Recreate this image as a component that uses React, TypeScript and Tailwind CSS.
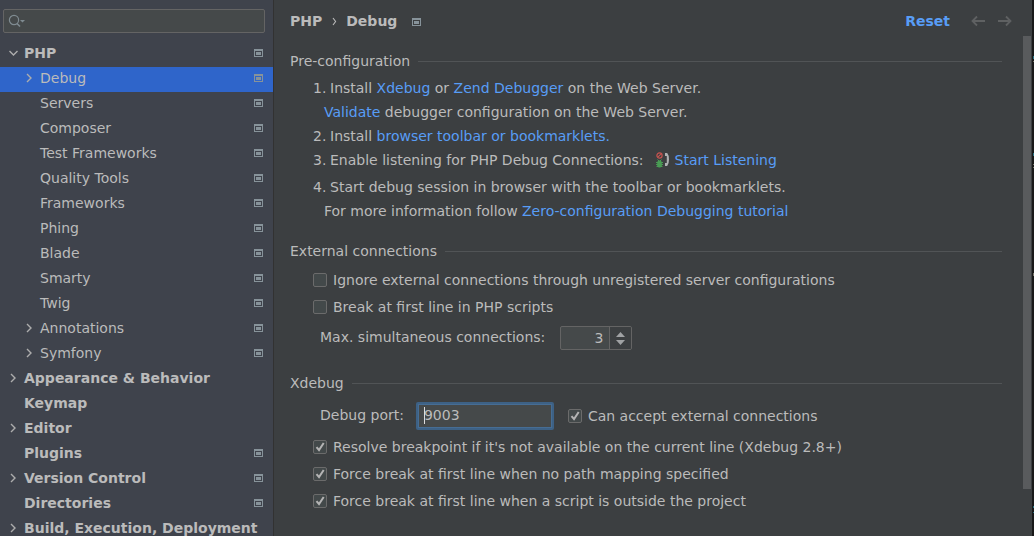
import React, { useState } from "react";

type Item = {
  label: string;
  level: 0 | 1;
  arrow?: "open" | "closed";
  project?: boolean;
};

const ITEMS: Item[] = [
  { label: "PHP", level: 0, arrow: "open", project: true },
  { label: "Debug", level: 1, arrow: "closed", project: true },
  { label: "Servers", level: 1, project: true },
  { label: "Composer", level: 1, project: true },
  { label: "Test Frameworks", level: 1, project: true },
  { label: "Quality Tools", level: 1, project: true },
  { label: "Frameworks", level: 1, project: true },
  { label: "Phing", level: 1, project: true },
  { label: "Blade", level: 1, project: true },
  { label: "Smarty", level: 1, project: true },
  { label: "Twig", level: 1, project: true },
  { label: "Annotations", level: 1, arrow: "closed", project: true },
  { label: "Symfony", level: 1, arrow: "closed", project: true },
  { label: "Appearance & Behavior", level: 0, arrow: "closed" },
  { label: "Keymap", level: 0 },
  { label: "Editor", level: 0, arrow: "closed" },
  { label: "Plugins", level: 0, project: true },
  { label: "Version Control", level: 0, arrow: "closed", project: true },
  { label: "Directories", level: 0, project: true },
  { label: "Build, Execution, Deployment", level: 0, arrow: "closed" },
];

function ProjectIcon() {
  return (
    <svg className="shrink-0" width="9" height="8" viewBox="0 0 9 8" shapeRendering="crispEdges" aria-hidden="true">
      <path fill="#87939a" fillRule="evenodd" d="M0 0h9v8H0zM1 2v5h7V2z" />
      <path fill="#87939a" d="M2 3h5v3H2z" />
    </svg>
  );
}

function Chevron({ open }: { open: boolean }) {
  return (
    <svg width="10" height="10" viewBox="0 0 10 10" fill="none" stroke="#adadad" strokeWidth="1.4" aria-hidden="true">
      <path d={open ? "M1.5 3l4 4 4-4" : "M3 1l4 4-4 4"} />
    </svg>
  );
}

function TreeRow({ item, selected, onSelect }: { item: Item; selected: boolean; onSelect: () => void }) {
  return (
    <li>
      <button
        type="button"
        onClick={onSelect}
        className={`flex h-[25px] w-full items-center pr-2.5 pb-[3px] text-left whitespace-nowrap ${
          item.level === 0 ? "pl-2 font-bold" : "pl-6"
        } ${selected ? "bg-[#2f65ca]" : ""}`}
      >
        <span className="flex w-4 shrink-0 items-center">
          {item.arrow && <Chevron open={item.arrow === "open"} />}
        </span>
        <span className="flex-1">{item.label}</span>
        {item.project && <ProjectIcon />}
      </button>
    </li>
  );
}

function SectionTitle({ children }: { children: React.ReactNode }) {
  return (
    <h2 className="flex h-5 items-center gap-2">
      {children}
      <span className="h-px flex-1 bg-[#515456]" />
    </h2>
  );
}

function Link({ children }: { children: React.ReactNode }) {
  return (
    <a href="#" className="text-[#589df6]">
      {children}
    </a>
  );
}

function Check({ label, initial = false }: { label: string; initial?: boolean }) {
  const [on, setOn] = useState(initial);
  return (
    <label className="flex h-[27px] items-center gap-1.5 whitespace-nowrap">
      <span className="grid size-3.5 shrink-0">
        <input
          type="checkbox"
          checked={on}
          onChange={(e) => setOn(e.target.checked)}
          className="col-start-1 row-start-1 size-3.5 appearance-none rounded-xs border border-[#6b6b6b] bg-[#43494a]"
        />
        {on && (
          <svg
            className="pointer-events-none col-start-1 row-start-1"
            width="14"
            height="14"
            viewBox="0 0 14 14"
            fill="none"
            stroke="#b4b4b4"
            strokeWidth="2"
            aria-hidden="true"
          >
            <path d="M3.5 7.2L6 10l4.7-7" />
          </svg>
        )}
      </span>
      {label}
    </label>
  );
}

function ListeningIcon() {
  return (
    <svg className="shrink-0" width="14" height="16" viewBox="0 0 14 16" fill="none" aria-hidden="true">
      <circle cx="4.5" cy="3.5" r="2.6" stroke="#c75450" strokeWidth="1.2" />
      <path d="M2.8 5.2l3.4-3.4" stroke="#c75450" strokeWidth="1.1" />
      <path d="M2.5 7.5l1.5 1.5M6.5 7.5L5 9M1 10.5h7M1 12.5h7M1.5 14.5h6" stroke="#499c54" strokeWidth="1" />
      <path d="M3 8.5h3l.8 2v3L5.5 15.5h-2L2.2 13.5v-3z" fill="#499c54" />
      <path d="M10 1h2.2Q14 3 14 7.5T12.2 14H10v-3h1.8V4H10z" fill="#afb1b3" />
    </svg>
  );
}

function Step({ n, children }: { n: number; children: React.ReactNode }) {
  return (
    <li className="flex leading-6">
      <span className="w-[17px] shrink-0">{n}.</span>
      <div>{children}</div>
    </li>
  );
}

export default function App() {
  const [selected, setSelected] = useState("Debug");
  const [port, setPort] = useState("9003");
  const [max, setMax] = useState(3);

  return (
    <div className="flex h-screen overflow-hidden bg-[#3c3f41] font-['DejaVu_Sans',sans-serif] text-sm text-[#bbbbbb]">
      <aside className="w-[274px] shrink-0 overflow-hidden border-r border-[#323232] bg-[#3f434c] pt-[9px]">
        <label className="mr-2 ml-[3px] flex h-6 items-center rounded-xs border border-[#646464] bg-[#45494a] pl-1">
          <svg width="18" height="14" viewBox="0 0 18 14" fill="none" aria-hidden="true">
            <circle cx="6" cy="6" r="4.6" stroke="#7f8b91" strokeWidth="1.2" />
            <path d="M9 9.5l3 3" stroke="#7f8b91" strokeWidth="1.6" />
            <path d="M12 6h5l-2.5 2.6z" fill="#7f8b91" />
          </svg>
          <input type="text" aria-label="Search settings" className="min-w-0 flex-1 bg-transparent outline-none" />
        </label>
        <ul className="pt-[9px]">
          {ITEMS.map((item) => (
            <TreeRow
              key={item.label}
              item={item}
              selected={item.label === selected}
              onSelect={() => setSelected(item.label)}
            />
          ))}
        </ul>
      </aside>

      <main className="flex min-w-0 flex-1 flex-col">
        <header className="flex h-9 shrink-0 items-center pt-1.5 pr-5 pl-4 font-bold">
          <h1 className="flex items-center">
            PHP
            <svg className="mr-[9px] ml-2.5" width="5" height="9" viewBox="0 0 5 9" fill="none" stroke="#bbbbbb" strokeWidth="1.1" aria-hidden="true">
              <path d="M1 1l2.6 3.5L1 8" />
            </svg>
            Debug
          </h1>
          <span className="ml-[15px] flex pt-px">
            <ProjectIcon />
          </span>
          <button type="button" className="ml-auto text-[#589df6]">
            Reset
          </button>
          <button type="button" aria-label="Back" className="ml-[21px]">
            <svg width="14" height="12" viewBox="0 0 14 12" fill="none" stroke="#5f6162" strokeWidth="1.8" aria-hidden="true">
              <path d="M14 6H1.5M6 1.5L1.5 6 6 10.5" />
            </svg>
          </button>
          <button type="button" aria-label="Forward" className="ml-[13px]">
            <svg width="14" height="12" viewBox="0 0 14 12" fill="none" stroke="#5f6162" strokeWidth="1.8" aria-hidden="true">
              <path d="M0 6h12.5M8 1.5L12.5 6 8 10.5" />
            </svg>
          </button>
        </header>

        <div className="flex min-h-0 flex-1">
          <div className="min-w-0 flex-1 overflow-hidden pt-[15px] pr-[21px] pl-4">
            <section>
              <SectionTitle>Pre-configuration</SectionTitle>
              <ol className="pt-[5px] pl-[23px] whitespace-nowrap">
                <Step n={1}>
                  Install <Link>Xdebug</Link> or <Link>Zend Debugger</Link> on the Web Server.
                </Step>
                <li className="pl-[11px] leading-6">
                  <Link>Validate</Link> debugger configuration on the Web Server.
                </li>
                <Step n={2}>
                  Install <Link>browser toolbar or bookmarklets.</Link>
                </Step>
                <Step n={3}>
                  <span className="flex items-center">
                    Enable listening for PHP Debug Connections:
                    <span className="mr-1.5 ml-[11px]">
                      <ListeningIcon />
                    </span>
                    <Link>Start Listening</Link>
                  </span>
                </Step>
                <li className="flex pt-[3px] leading-6">
                  <span className="w-[17px] shrink-0">4.</span>
                  <div>Start debug session in browser with the toolbar or bookmarklets.</div>
                </li>
                <li className="pl-[11px] leading-6">
                  For more information follow <Link>Zero-configuration Debugging tutorial</Link>
                </li>
              </ol>
            </section>

            <section className="pt-[18px]">
              <SectionTitle>External connections</SectionTitle>
              <div className="pt-[5px] pl-[23px]">
                <Check label="Ignore external connections through unregistered server configurations" />
                <Check label="Break at first line in PHP scripts" />
                <div className="flex items-center gap-[15px] pt-1.5 pl-[7px]">
                  <label htmlFor="max" className="pb-0.5 whitespace-nowrap">
                    Max. simultaneous connections:
                  </label>
                  <div className="flex h-6 w-[72px] overflow-hidden rounded-xs border border-[#646464] bg-[#45494a]">
                    <input
                      id="max"
                      type="text"
                      inputMode="numeric"
                      value={max}
                      onChange={(e) => setMax(Number(e.target.value) || 0)}
                      className="w-12 min-w-0 bg-transparent pr-1.5 text-right outline-none"
                    />
                    <div className="flex flex-1 flex-col items-center justify-center gap-[3px] border-l border-[#646464] bg-[#3c3f41]">
                      <button type="button" aria-label="Increase" onClick={() => setMax(max + 1)} className="block">
                        <svg className="block" width="9" height="5" viewBox="0 0 9 5" aria-hidden="true">
                          <path d="M0 5L4.5 0 9 5z" fill="#a0a2a4" />
                        </svg>
                      </button>
                      <button type="button" aria-label="Decrease" onClick={() => setMax(max - 1)} className="block">
                        <svg className="block" width="9" height="5" viewBox="0 0 9 5" aria-hidden="true">
                          <path d="M0 0l4.5 5L9 0z" fill="#a0a2a4" />
                        </svg>
                      </button>
                    </div>
                  </div>
                </div>
              </div>
            </section>

            <section className="pt-[23px]">
              <SectionTitle>Xdebug</SectionTitle>
              <div className="pt-[9px] pl-[23px]">
                <div className="flex items-center pb-[3px] pl-[7px]">
                  <label htmlFor="port" className="pb-0.5 whitespace-nowrap">
                    Debug port:
                  </label>
                  <div className="relative mr-3.5 ml-3">
                    <input
                      id="port"
                      type="text"
                      value={port}
                      onChange={(e) => setPort(e.target.value)}
                      className="block h-7 w-[138px] rounded-xs border-2 border-[#3d6185] bg-[#45494a] pb-0.5 pl-1.5 caret-transparent ring-1 ring-[#466d94] outline-none ring-inset"
                    />
                    <span className="absolute top-[5px] left-2 h-[17px] w-px bg-[#dddddd]" />
                  </div>
                  <Check label="Can accept external connections" initial />
                </div>
                <Check label="Resolve breakpoint if it's not available on the current line (Xdebug 2.8+)" initial />
                <Check label="Force break at first line when no path mapping specified" initial />
                <Check label="Force break at first line when a script is outside the project" initial />
              </div>
            </section>
          </div>
          <div className="w-[9px] shrink-0">
            <div className="h-[90.6%] w-2 bg-[#595b5d]" />
          </div>
        </div>
      </main>

      <svg className="h-full w-0.5 shrink-0 bg-[#191919]" aria-hidden="true">
        <path fill="#2a7080" d="M1 56h1v3h-1zM1 153h1v3h-1zM1 506h1v2h-1zM1 512h1v1h-1z" />
        <path fill="#77756a" d="M1 61h1v1h-1zM1 164h1v1h-1zM1 167h1v1h-1zM1 273h1v3h-1z" />
      </svg>
    </div>
  );
}
